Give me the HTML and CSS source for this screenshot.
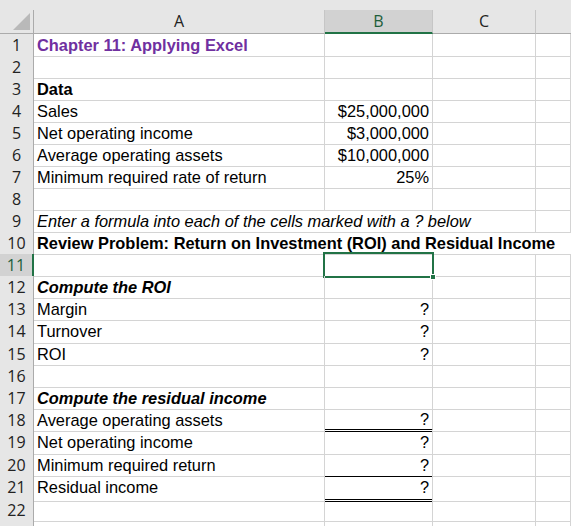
FILE: index.html
```html
<!DOCTYPE html>
<html lang="en">
<head>
    <meta charset="UTF-8">
    <title>Chapter 11: Applying Excel</title>
    <link rel="stylesheet" href="styles.css">
</head>
<body>
    <div class="sheet">
        <div class="top-strip"></div>

        <div class="row head-row">
            <div class="corner">
                <svg width="17" height="17" viewBox="0 0 17 17"><polygon points="17,0 17,17 0,17" fill="#b9b9b9"/></svg>
            </div>
            <div class="col-head">A</div>
            <div class="col-head active">B</div>
            <div class="col-head">C</div>
            <div class="col-head last"></div>
        </div>

        <div class="row"><div class="num">1</div><div class="cell title">Chapter 11: Applying Excel</div><div class="cell"></div><div class="cell"></div><div class="cell"></div></div>
        <div class="row"><div class="num">2</div><div class="cell"></div><div class="cell"></div><div class="cell"></div><div class="cell"></div></div>
        <div class="row"><div class="num">3</div><div class="cell bold">Data</div><div class="cell"></div><div class="cell"></div><div class="cell"></div></div>
        <div class="row"><div class="num">4</div><div class="cell">Sales</div><div class="cell right">$25,000,000</div><div class="cell"></div><div class="cell"></div></div>
        <div class="row"><div class="num">5</div><div class="cell">Net operating income</div><div class="cell right">$3,000,000</div><div class="cell"></div><div class="cell"></div></div>
        <div class="row"><div class="num">6</div><div class="cell">Average operating assets</div><div class="cell right">$10,000,000</div><div class="cell"></div><div class="cell"></div></div>
        <div class="row"><div class="num">7</div><div class="cell">Minimum required rate of return</div><div class="cell right">25%</div><div class="cell"></div><div class="cell"></div></div>
        <div class="row"><div class="num">8</div><div class="cell"></div><div class="cell"></div><div class="cell"></div><div class="cell"></div></div>
        <div class="row"><div class="num">9</div><div class="cell italic span-3">Enter a formula into each of the cells marked with a ? below</div><div class="cell"></div></div>
        <div class="row"><div class="num">10</div><div class="cell bold span-4">Review Problem: Return on Investment (ROI) and Residual Income</div></div>
        <div class="row"><div class="num active">11</div><div class="cell"></div><div class="cell selected"><span class="handle"></span></div><div class="cell"></div><div class="cell"></div></div>
        <div class="row"><div class="num">12</div><div class="cell bold italic">Compute the ROI</div><div class="cell"></div><div class="cell"></div><div class="cell"></div></div>
        <div class="row"><div class="num">13</div><div class="cell">Margin</div><div class="cell right">?</div><div class="cell"></div><div class="cell"></div></div>
        <div class="row tall"><div class="num">14</div><div class="cell">Turnover</div><div class="cell right">?</div><div class="cell"></div><div class="cell"></div></div>
        <div class="row"><div class="num">15</div><div class="cell">ROI</div><div class="cell right">?</div><div class="cell"></div><div class="cell"></div></div>
        <div class="row"><div class="num">16</div><div class="cell"></div><div class="cell"></div><div class="cell"></div><div class="cell"></div></div>
        <div class="row"><div class="num">17</div><div class="cell bold italic">Compute the residual income</div><div class="cell"></div><div class="cell"></div><div class="cell"></div></div>
        <div class="row"><div class="num">18</div><div class="cell">Average operating assets</div><div class="cell right double">?</div><div class="cell"></div><div class="cell"></div></div>
        <div class="row tall"><div class="num">19</div><div class="cell">Net operating income</div><div class="cell right">?</div><div class="cell"></div><div class="cell"></div></div>
        <div class="row"><div class="num">20</div><div class="cell">Minimum required return</div><div class="cell right single">?</div><div class="cell"></div><div class="cell"></div></div>
        <div class="row tall"><div class="num">21</div><div class="cell">Residual income</div><div class="cell right double">?</div><div class="cell"></div><div class="cell"></div></div>
        <div class="row"><div class="num">22</div><div class="cell"></div><div class="cell"></div><div class="cell"></div><div class="cell"></div></div>
        <div class="row"><div class="num"></div><div class="cell"></div><div class="cell"></div><div class="cell"></div><div class="cell"></div></div>
    </div>
</body>
</html>
```

FILE: styles.css
```css
body {
    margin: 0;
    padding: 0;
    background: #ffffff;
    overflow: hidden;
}
.sheet {
    width: 571px;
    height: 526px;
    overflow: hidden;
    font-family: "Liberation Sans", Arial, sans-serif;
    font-size: 16.4px;
    color: #000;
}
.top-strip {
    height: 10px;
    background: #e6e6e6;
}
.row {
    display: grid;
    grid-template-columns: 34px 291px 108px 103px 1fr;
    height: 22px;
}
.row.tall {
    height: 23px;
}
.head-row {
    height: 24px;
    background: #e6e6e6;
}
.corner {
    border-right: 1px solid #ababab;
    border-bottom: 1px solid #ababab;
    display: flex;
    align-items: flex-end;
    justify-content: flex-end;
    padding: 0 3px 3px 0;
    box-sizing: border-box;
}
.corner svg {
    display: block;
}
.col-head {
    border-right: 1px solid #c6c6c6;
    border-bottom: 1px solid #ababab;
    box-sizing: border-box;
    text-align: center;
    font-family: "Open Sans", "Noto Sans", sans-serif;
    font-size: 16px;
    line-height: 23px;
    color: #222;
}
.col-head.active {
    background: #d2d2d2;
    border-bottom: 2px solid #217346;
    color: #1d5e3a;
    line-height: 22px;
}
.col-head.last {
    border-right: none;
}
.num {
    background: #e6e6e6;
    border-right: 1px solid #ababab;
    border-bottom: 1px solid #d4d4d4;
    box-sizing: border-box;
    text-align: center;
    font-family: "Open Sans", "Noto Sans", sans-serif;
    font-size: 16px;
    line-height: 22px;
    color: #222;
}
.num.active {
    background: #d2d2d2;
    border-right: 2px solid #217346;
    color: #1d5e3a;
}
.cell {
    position: relative;
    border-right: 1px solid #d4d4d4;
    border-bottom: 1px solid #d4d4d4;
    box-sizing: border-box;
    padding: 0 3px;
    line-height: 22px;
    white-space: nowrap;
    overflow: visible;
}
.tall .cell, .tall .num {
    line-height: 23px;
}
.right {
    text-align: right;
}
.bold {
    font-weight: bold;
}
.italic {
    font-style: italic;
}
.title {
    font-weight: bold;
    color: #7030a0;
}
.span-3 {
    grid-column: span 3;
}
.span-4 {
    grid-column: span 4;
    border-right: none;
}
.double {
    border-bottom: 3px double #000;
    line-height: 20px;
}
.single {
    border-bottom: 1px solid #000;
}
.selected::after {
    content: "";
    position: absolute;
    left: -2px;
    top: -2px;
    right: -2px;
    bottom: -2px;
    border: 2px solid #217346;
}
.handle {
    position: absolute;
    right: -4px;
    bottom: -4px;
    width: 6px;
    height: 6px;
    background: #217346;
    border: 1px solid #fff;
    box-sizing: border-box;
    z-index: 2;
}
```
